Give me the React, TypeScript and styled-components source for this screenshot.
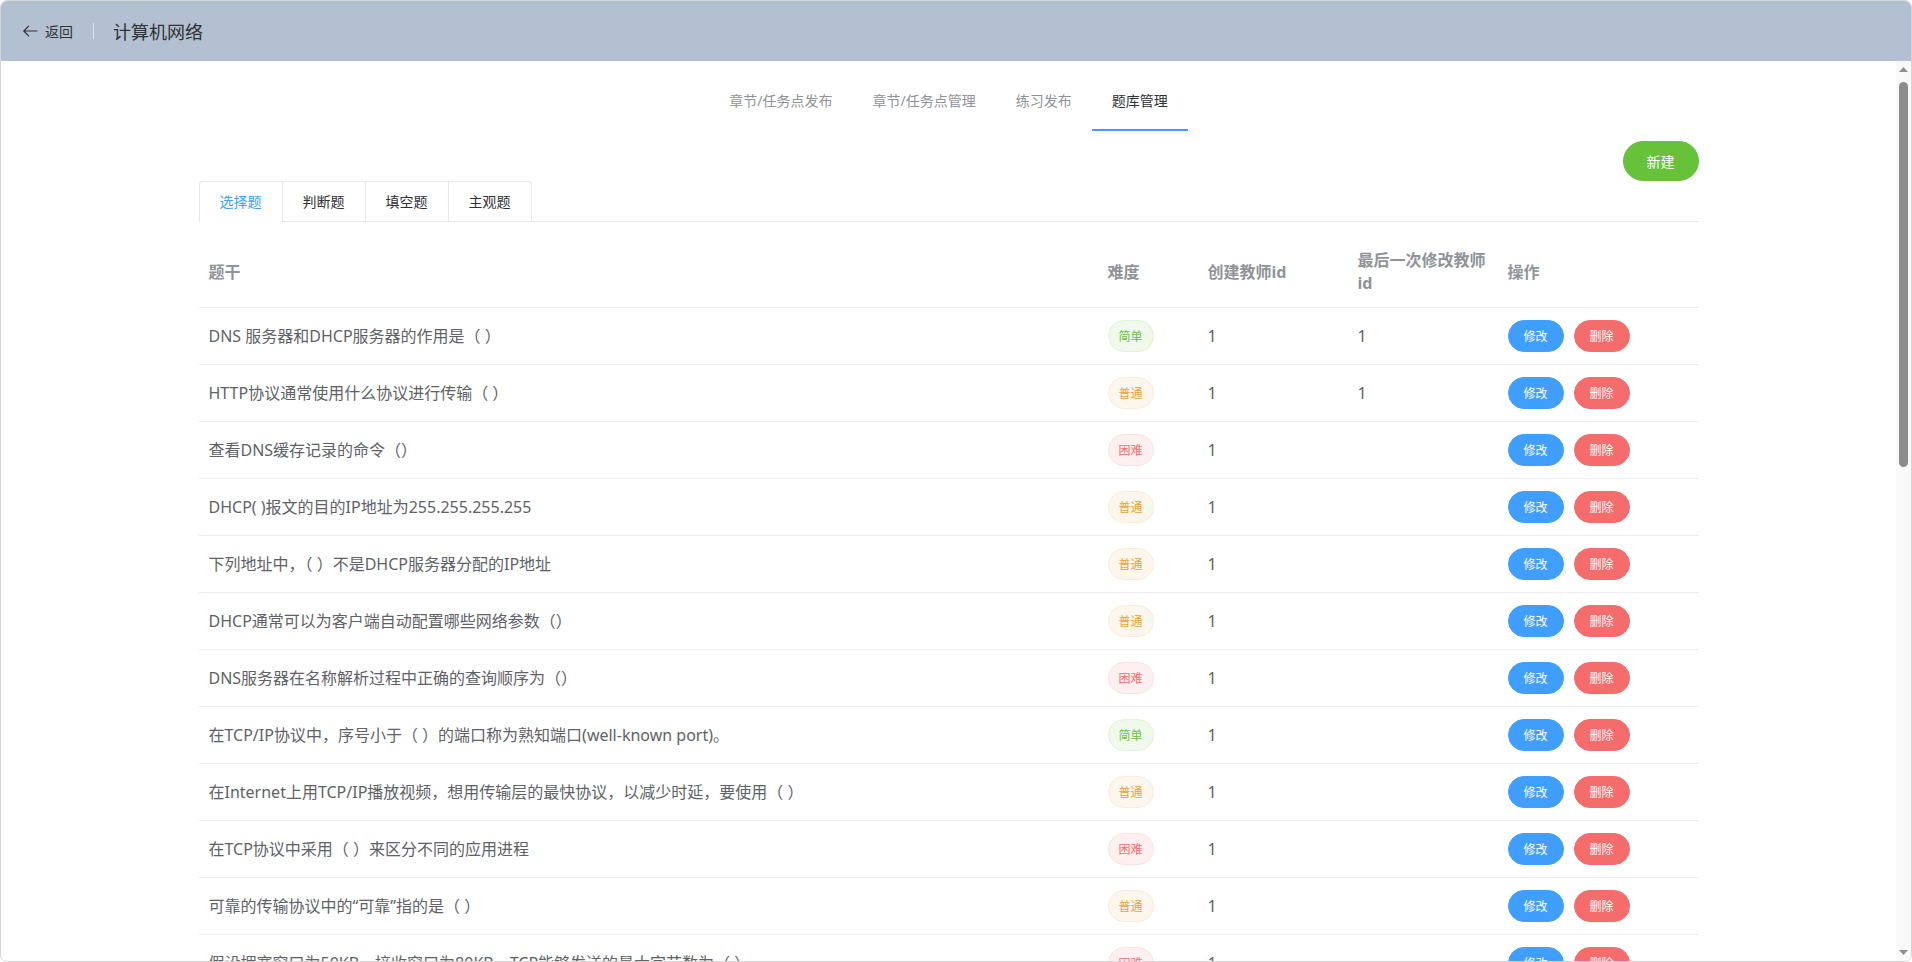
import React from "react";
import styled, { createGlobalStyle } from "styled-components";

const GlobalStyle = createGlobalStyle`
  html, body { margin: 0; padding: 0; background: #fff; overflow: hidden; }
  body { font-family: "Noto Sans", "Noto Sans CJK SC", sans-serif; }
  * { box-sizing: border-box; }
`;

const Frame = styled.div`
  width: 1912px;
  height: 962px;
  border: 1px solid #d5d5d5;
  border-radius: 7px;
  overflow: hidden;
  display: flex;
  flex-direction: column;
  background: #fff;
`;

const Header = styled.header`
  flex: none;
  height: 60px;
  background: #b3c0d1;
  display: flex;
  align-items: center;
  padding-left: 21px;
`;

const BackLink = styled.div`
  display: flex;
  align-items: center;
  font-size: 14px;
  color: #303133;
  cursor: pointer;
  svg { margin-right: 7px; }
`;

const Divider = styled.span`
  width: 1px;
  height: 16px;
  background: #dcdfe6;
  margin: 0 19px 0 20px;
`;

const Title = styled.div`
  font-size: 18px;
  color: #303133;
`;

const Body = styled.div`
  flex: 1;
  min-height: 0;
  display: flex;
`;

const Main = styled.main`
  flex: 1;
  min-width: 0;
  overflow: hidden;
`;

const Container = styled.div`
  width: 1500px;
  margin: 0 auto;
  padding-top: 10px;
`;

const Menu = styled.nav`
  display: flex;
  justify-content: center;
  height: 60px;
`;

const MenuItem = styled.div<{ $active?: boolean }>`
  height: 60px;
  line-height: 60px;
  padding: 0 20px;
  font-size: 14px;
  color: ${(p) => (p.$active ? "#303133" : "#909399")};
  border-bottom: 2px solid ${(p) => (p.$active ? "#409eff" : "transparent")};
  cursor: pointer;
  white-space: nowrap;
`;

const Toolbar = styled.div`
  display: flex;
  justify-content: flex-end;
  margin-top: 10px;
`;

const NewButton = styled.button`
  height: 40px;
  padding: 0 23px;
  border-radius: 20px;
  border: 1px solid #67c23a;
  background: #67c23a;
  color: #fff;
  font-size: 14px;
  font-family: inherit;
  cursor: pointer;
`;

const TabsHeader = styled.div`
  display: flex;
  border-bottom: 1px solid #e4e7ed;
  margin-bottom: 15px;
`;

const TabsNav = styled.div`
  display: flex;
  border: 1px solid #e4e7ed;
  border-bottom: none;
  border-radius: 4px 4px 0 0;
  margin-bottom: -1px;
`;

const TabItem = styled.div<{ $active?: boolean; $first?: boolean }>`
  height: 40px;
  line-height: 39px;
  padding: 0 20px;
  font-size: 14px;
  color: ${(p) => (p.$active ? "#409eff" : "#303133")};
  border-left: ${(p) => (p.$first ? "none" : "1px solid #e4e7ed")};
  border-bottom: 1px solid ${(p) => (p.$active ? "#fff" : "transparent")};
  cursor: pointer;
`;

const Table = styled.table`
  width: 1500px;
  table-layout: fixed;
  border-collapse: separate;
  border-spacing: 0;
`;

const Th = styled.th`
  padding: 12px 0;
  text-align: left;
  vertical-align: middle;
  border-bottom: 1px solid #ebeef5;
  color: #909399;
  font-weight: bold;
  font-size: 16px;
  line-height: 23px;
`;

const Td = styled.td`
  padding: 12px 0;
  text-align: left;
  vertical-align: middle;
  border-bottom: 1px solid #ebeef5;
  color: #606266;
  font-size: 16px;
  line-height: 23px;
`;

const Cell = styled.div`
  padding: 0 10px;
  white-space: normal;
  word-break: normal;
`;

const ActionCell = styled.div`
  padding: 0 10px;
  display: flex;
  align-items: center;
`;

type Level = "success" | "warning" | "danger";

const tagColors: Record<Level, { bg: string; bd: string; fg: string }> = {
  success: { bg: "#f0f9eb", bd: "#e1f3d8", fg: "#67c23a" },
  warning: { bg: "#fdf6ec", bd: "#faecd8", fg: "#e6a23c" },
  danger: { bg: "#fef0f0", bd: "#fde2e2", fg: "#f56c6c" },
};

const Tag = styled.span<{ $type: Level }>`
  display: inline-flex;
  align-items: center;
  height: 32px;
  padding: 0 10px;
  font-size: 12px;
  border-radius: 16px;
  border: 1px solid ${(p) => tagColors[p.$type].bd};
  background: ${(p) => tagColors[p.$type].bg};
  color: ${(p) => tagColors[p.$type].fg};
  vertical-align: middle;
`;

const SmallButton = styled.button<{ $variant: "primary" | "danger" }>`
  height: 32px;
  padding: 0 15px;
  font-size: 12px;
  font-family: inherit;
  border-radius: 20px;
  border: 1px solid ${(p) => (p.$variant === "primary" ? "#409eff" : "#f56c6c")};
  background: ${(p) => (p.$variant === "primary" ? "#409eff" : "#f56c6c")};
  color: #fff;
  cursor: pointer;
  & + & { margin-left: 10px; }
`;

const ScrollTrack = styled.div`
  flex: none;
  width: 15px;
  background: #f9f9f9;
  display: flex;
  flex-direction: column;
  align-items: center;
`;

const ScrollArrow = styled.div`
  height: 17px;
  width: 100%;
  display: flex;
  align-items: center;
  justify-content: center;
`;

const Thumb = styled.div`
  width: 9px;
  height: 385px;
  margin-top: 4px;
  border-radius: 5px;
  background: #8c8c8c;
`;

const Spacer = styled.div`
  flex: 1;
`;

const levelText: Record<Level, string> = { success: "简单", warning: "普通", danger: "困难" };

const rows: { q: string; level: Level; creator: string; editor: string }[] = [
  { q: "DNS 服务器和DHCP服务器的作用是（ ）", level: "success", creator: "1", editor: "1" },
  { q: "HTTP协议通常使用什么协议进行传输（ ）", level: "warning", creator: "1", editor: "1" },
  { q: "查看DNS缓存记录的命令（）", level: "danger", creator: "1", editor: "" },
  { q: "DHCP( )报文的目的IP地址为255.255.255.255", level: "warning", creator: "1", editor: "" },
  { q: "下列地址中，（ ）不是DHCP服务器分配的IP地址", level: "warning", creator: "1", editor: "" },
  { q: "DHCP通常可以为客户端自动配置哪些网络参数（）", level: "warning", creator: "1", editor: "" },
  { q: "DNS服务器在名称解析过程中正确的查询顺序为（）", level: "danger", creator: "1", editor: "" },
  { q: "在TCP/IP协议中，序号小于（ ）的端口称为熟知端口(well-known port)。", level: "success", creator: "1", editor: "" },
  { q: "在Internet上用TCP/IP播放视频，想用传输层的最快协议，以减少时延，要使用（ ）", level: "warning", creator: "1", editor: "" },
  { q: "在TCP协议中采用（ ）来区分不同的应用进程", level: "danger", creator: "1", editor: "" },
  { q: "可靠的传输协议中的“可靠”指的是（ ）", level: "warning", creator: "1", editor: "" },
  { q: "假设拥塞窗口为50KB，接收窗口为80KB，TCP能够发送的最大字节数为（ ）", level: "danger", creator: "1", editor: "" },
];

const menuItems = ["章节/任务点发布", "章节/任务点管理", "练习发布", "题库管理"];
const tabItems = ["选择题", "判断题", "填空题", "主观题"];

const BackIcon = () => (
  <svg width="16" height="16" viewBox="0 0 16 16" fill="none">
    <path d="M15 8H1.8M6.6 3.2L1.8 8l4.8 4.8" stroke="#303133" strokeWidth="1.2" strokeLinecap="round" strokeLinejoin="round" />
  </svg>
);

const Triangle = ({ up }: { up?: boolean }) => (
  <svg width="9" height="5" viewBox="0 0 9 5">
    <path d={up ? "M4.5 0L9 5H0z" : "M0 0h9L4.5 5z"} fill="#8f8f8f" />
  </svg>
);

export default function App() {
  return (
    <>
      <GlobalStyle />
      <Frame>
        <Header>
          <BackLink>
            <BackIcon />
            返回
          </BackLink>
          <Divider />
          <Title>计算机网络</Title>
        </Header>
        <Body>
          <Main>
            <Container>
              <Menu>
                {menuItems.map((m, i) => (
                  <MenuItem key={m} $active={i === 3}>
                    {m}
                  </MenuItem>
                ))}
              </Menu>
              <Toolbar>
                <NewButton>新建</NewButton>
              </Toolbar>
              <TabsHeader>
                <TabsNav>
                  {tabItems.map((t, i) => (
                    <TabItem key={t} $active={i === 0} $first={i === 0}>
                      {t}
                    </TabItem>
                  ))}
                </TabsNav>
              </TabsHeader>
              <Table>
                <colgroup>
                  <col style={{ width: 899 }} />
                  <col style={{ width: 100 }} />
                  <col style={{ width: 150 }} />
                  <col style={{ width: 150 }} />
                  <col style={{ width: 201 }} />
                </colgroup>
                <thead>
                  <tr>
                    <Th><Cell>题干</Cell></Th>
                    <Th><Cell>难度</Cell></Th>
                    <Th><Cell>创建教师id</Cell></Th>
                    <Th><Cell>最后一次修改教师id</Cell></Th>
                    <Th><Cell>操作</Cell></Th>
                  </tr>
                </thead>
                <tbody>
                  {rows.map((r, i) => (
                    <tr key={i}>
                      <Td><Cell>{r.q}</Cell></Td>
                      <Td>
                        <ActionCell>
                          <Tag $type={r.level}>{levelText[r.level]}</Tag>
                        </ActionCell>
                      </Td>
                      <Td><Cell>{r.creator}</Cell></Td>
                      <Td><Cell>{r.editor}</Cell></Td>
                      <Td>
                        <ActionCell>
                          <SmallButton $variant="primary">修改</SmallButton>
                          <SmallButton $variant="danger">删除</SmallButton>
                        </ActionCell>
                      </Td>
                    </tr>
                  ))}
                </tbody>
              </Table>
            </Container>
          </Main>
          <ScrollTrack>
            <ScrollArrow>
              <Triangle up />
            </ScrollArrow>
            <Thumb />
            <Spacer />
            <ScrollArrow>
              <Triangle />
            </ScrollArrow>
          </ScrollTrack>
        </Body>
      </Frame>
    </>
  );
}
